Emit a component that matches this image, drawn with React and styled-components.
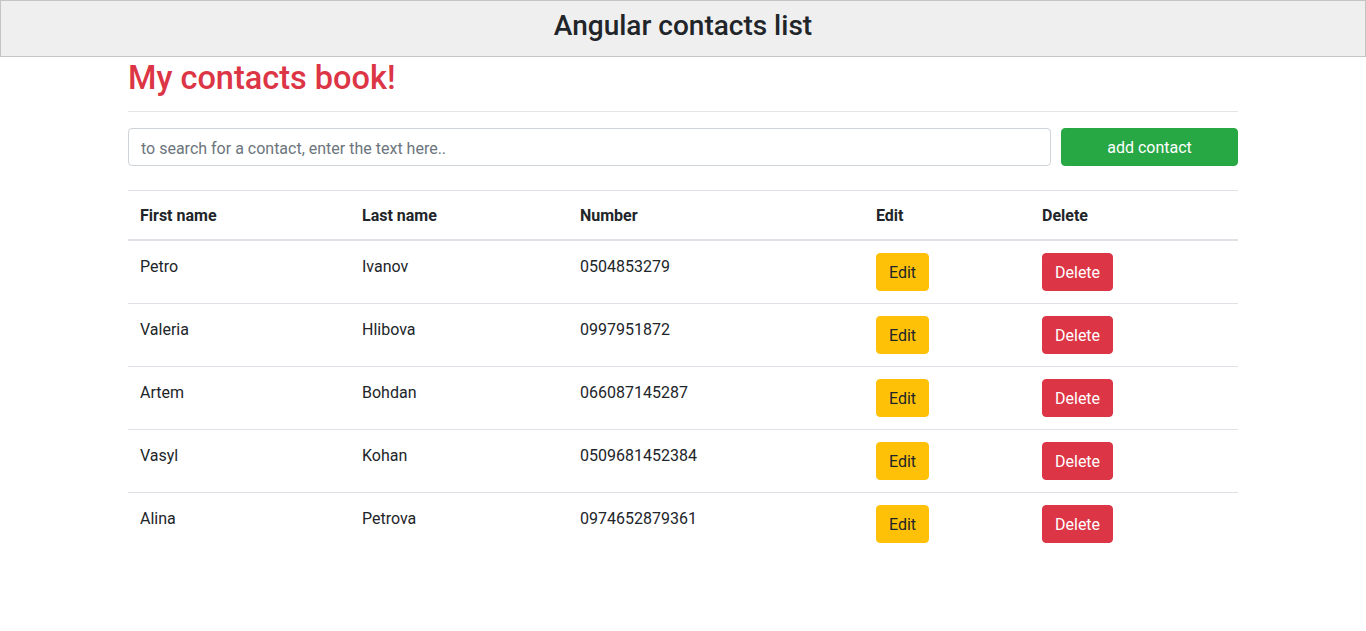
import React from 'react'
import styled, { createGlobalStyle } from 'styled-components'

const contacts = [
	{ first: 'Petro', last: 'Ivanov', number: '0504853279' },
	{ first: 'Valeria', last: 'Hlibova', number: '0997951872' },
	{ first: 'Artem', last: 'Bohdan', number: '066087145287' },
	{ first: 'Vasyl', last: 'Kohan', number: '0509681452384' },
	{ first: 'Alina', last: 'Petrova', number: '0974652879361' }
]

const columns = [
	{ title: 'First name', width: 222 },
	{ title: 'Last name', width: 218 },
	{ title: 'Number', width: 296 },
	{ title: 'Edit', width: 166 },
	{ title: 'Delete', width: 208 }
]

const App = () => {
	return (
		<>
			<GlobalStyle />
			<Header>
				<HeaderTitle>Angular contacts list</HeaderTitle>
			</Header>
			<Container>
				<PageTitle>My contacts book!</PageTitle>
				<Divider />
				<SearchRow>
					<SearchInput placeholder='to search for a contact, enter the text here..' />
					<Button $variant='success' $wide>add contact</Button>
				</SearchRow>
				<Table>
					<colgroup>
						{columns.map(({ title, width }) => (
							<col key={title} style={{ width }} />
						))}
					</colgroup>
					<thead>
						<tr>
							{columns.map(({ title }) => (
								<Th key={title}>{title}</Th>
							))}
						</tr>
					</thead>
					<tbody>
						{contacts.map(({ first, last, number }) => (
							<tr key={number}>
								<Td $text>{first}</Td>
								<Td $text>{last}</Td>
								<Td $text>{number}</Td>
								<Td><Button $variant='warning'>Edit</Button></Td>
								<Td><Button $variant='danger'>Delete</Button></Td>
							</tr>
						))}
					</tbody>
				</Table>
			</Container>
		</>
	)
}

export default App

const GlobalStyle = createGlobalStyle`
	* {
		box-sizing: border-box;
	}

	body {
		margin: 0;
		background: #fff;
		color: #212529;
		font-family: Roboto, 'Noto Sans', sans-serif;
		font-size: 16px;
		line-height: 1.5;
	}
`

const Header = styled.header`
	align-items: center;
	background: #efefef;
	border: 1px solid #c4c4c4;
	display: flex;
	height: 57px;
	justify-content: center;
	padding-bottom: 5px;
`

const HeaderTitle = styled.h3`
	font-size: 28px;
	font-weight: 500;
	line-height: 1.2;
	margin: 0;
`

const Container = styled.main`
	margin: 0 auto;
	max-width: 1140px;
	padding: 0 15px;
`

const PageTitle = styled.h2`
	color: #dc3545;
	font-size: 32.5px;
	font-weight: 500;
	line-height: 1.2;
	margin: 0;
	padding-top: 2px;
	height: 39px;
`

const Divider = styled.hr`
	border: 0;
	border-top: 1px solid rgba(0, 0, 0, 0.1);
	margin: 15px 0 16px;
`

const SearchRow = styled.div`
	display: flex;
	gap: 10px;
	margin-bottom: 24px;
`

const SearchInput = styled.input`
	border: 1px solid #ced4da;
	border-radius: 4px;
	color: #495057;
	flex: 1;
	font-family: inherit;
	font-size: 16px;
	height: 38px;
	line-height: 1.5;
	padding: 7px 12px 5px;

	&::placeholder {
		color: #6c757d;
	}
`

const variants = {
	success: { bg: '#28a745', fg: '#fff' },
	warning: { bg: '#ffc107', fg: '#212529' },
	danger: { bg: '#dc3545', fg: '#fff' }
}

const Button = styled.button`
	background: ${props => variants[props.$variant].bg};
	border: 1px solid ${props => variants[props.$variant].bg};
	border-radius: 4px;
	color: ${props => variants[props.$variant].fg};
	cursor: pointer;
	font-family: inherit;
	font-size: 16px;
	height: 38px;
	line-height: 1.5;
	padding: 7px 12px 5px;
	width: ${props => (props.$wide ? '177px' : 'auto')};
`

const Table = styled.table`
	border-collapse: collapse;
	table-layout: fixed;
	width: 100%;
`

const Th = styled.th`
	border-bottom: 2px solid #dee2e6;
	border-top: 1px solid #dee2e6;
	font-weight: 700;
	padding: 13px 12px 11px;
	text-align: left;
	vertical-align: bottom;
`

const Td = styled.td`
	border-top: 1px solid #dee2e6;
	padding: ${props => (props.$text ? '14px 12px 10px' : '12px')};
	vertical-align: top;

	tbody tr:first-child & {
		border-top: 0;
	}
`
